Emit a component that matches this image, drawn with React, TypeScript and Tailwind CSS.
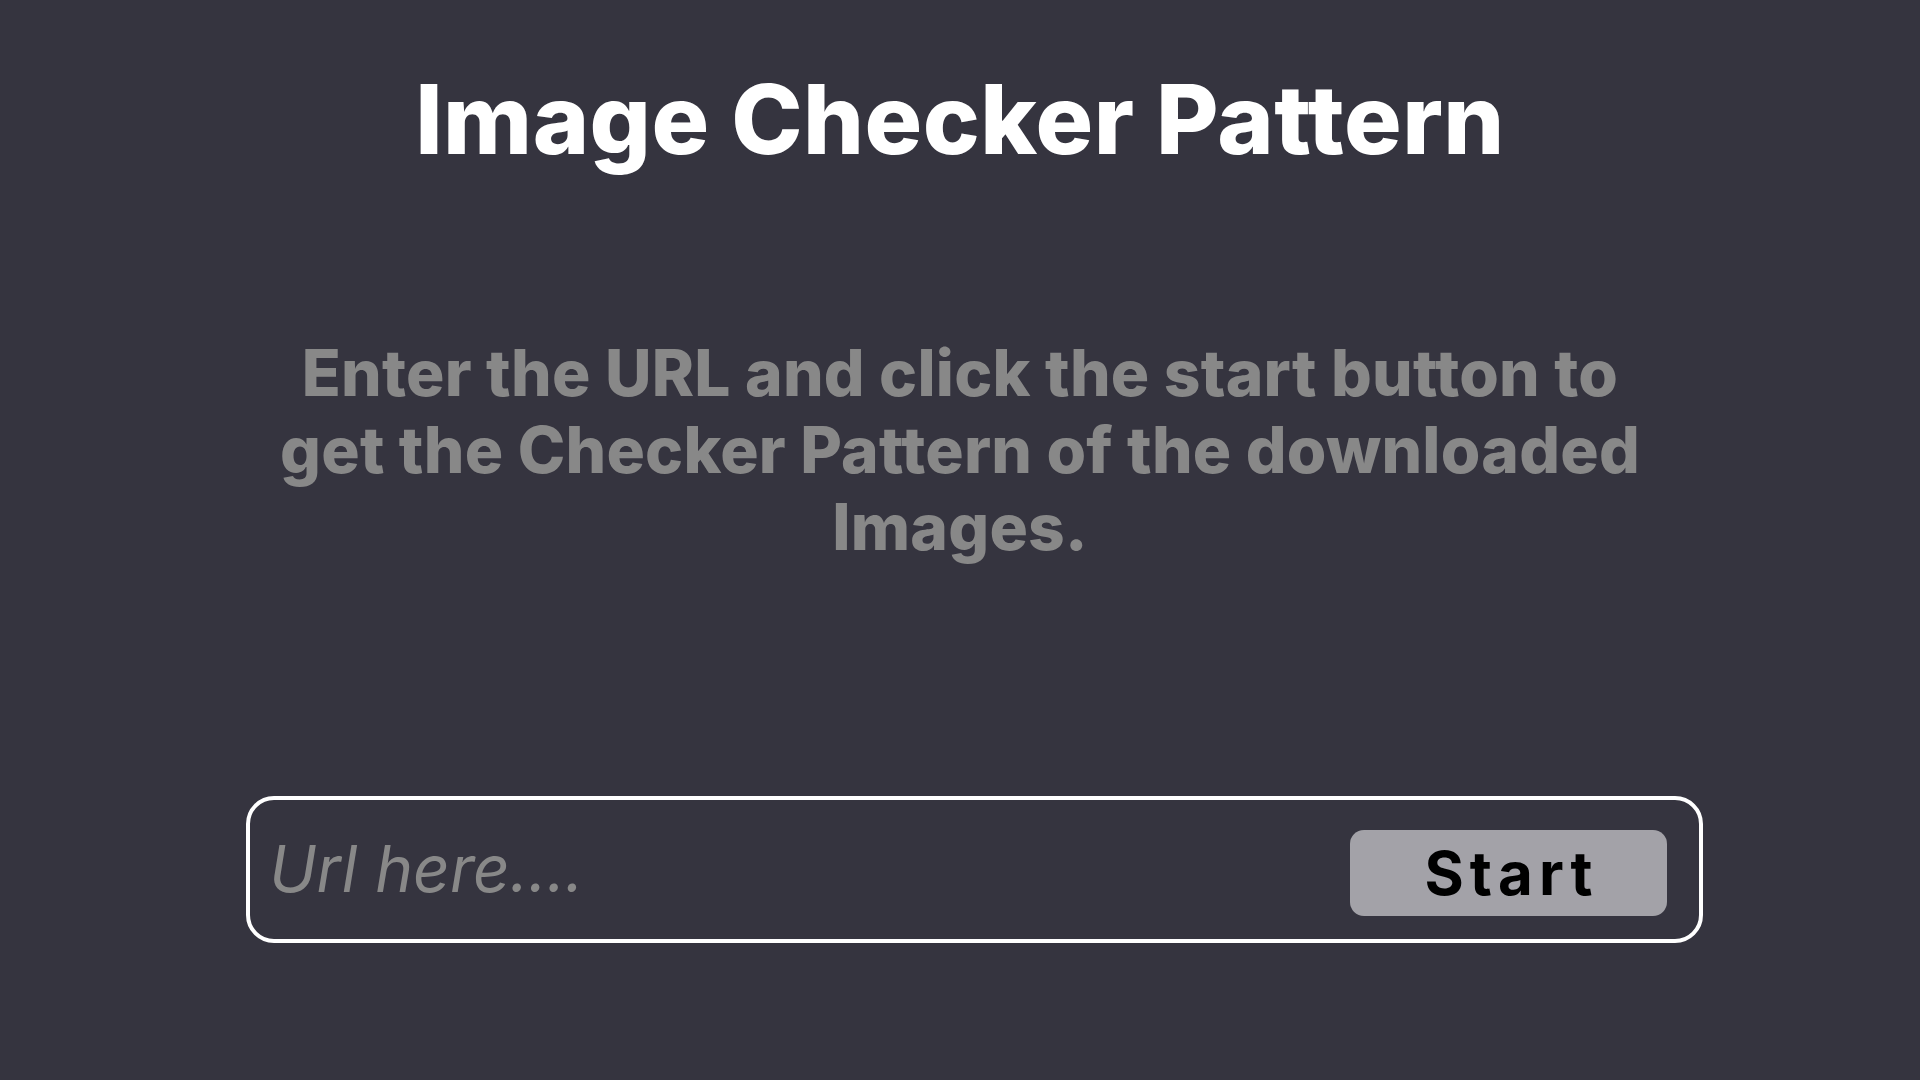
import React from "react";

export default function App() {
  return (
    <div
      className="w-full min-h-[1080px] bg-[#35343f] flex flex-col items-center"
      style={{ fontFamily: "Inter, 'Noto Sans', sans-serif" }}
    >
      <h1 className="mt-[71px] text-[96px] leading-[96px] font-extrabold text-white tracking-[0.5px] [font-variant-ligatures:none]">
        Image Checker Pattern
      </h1>
      <p className="mt-[167px] max-w-[1400px] text-center text-[64px] leading-[77px] font-extrabold text-[#888888] tracking-[0.25px] [font-variant-ligatures:none]">
        Enter the URL and click the start button to get the Checker Pattern of the downloaded Images.
      </p>
      <div className="w-full mt-[231px] pl-[246px]">
        <div className="w-[1457px] h-[147px] border-[4px] border-white rounded-[28px] flex items-start pl-[19px] pr-[32px]">
          <input
            type="text"
            placeholder="Url here...."
            className="flex-1 mt-[26px] h-[86px] bg-transparent outline-none text-[64px] italic text-white placeholder:text-[#888888]"
            style={{ fontFamily: "Inter, 'Noto Sans', sans-serif" }}
          />
          <button
            className="mt-[30px] w-[317px] h-[86px] rounded-[14px] bg-[#a3a2a8] text-black text-[60px] font-bold tracking-[6px] pl-[6px] flex items-center justify-center"
            style={{ fontFamily: "Inter, 'Noto Sans', sans-serif" }}
          >
            Start
          </button>
        </div>
      </div>
    </div>
  );
}
